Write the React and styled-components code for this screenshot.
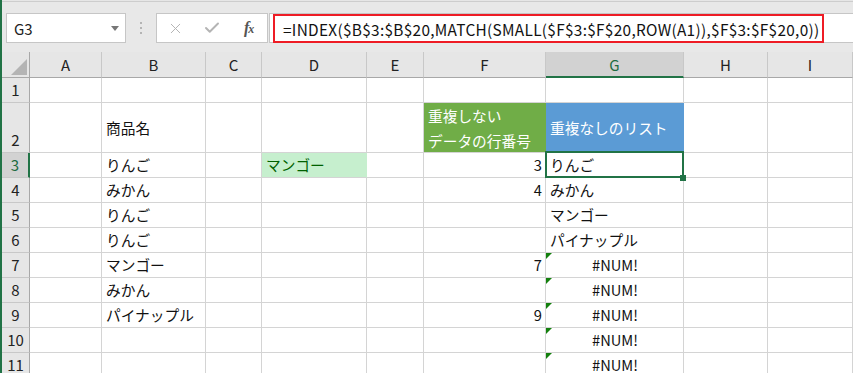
import React from "react";
import styled, { createGlobalStyle, css } from "styled-components";
import { X, Check } from "lucide-react";

const GlobalStyle = createGlobalStyle`
  html, body {
    margin: 0;
    padding: 0;
    overflow: hidden;
    background: #e6e6e6;
  }
  body {
    font-family: "Noto Sans CJK JP", "Noto Sans", sans-serif;
  }
`;

const Window = styled.div`
  width: 853px;
  height: 373px;
  box-sizing: border-box;
  border-left: 2px solid #217346;
  background: #e6e6e6;
  overflow: hidden;
`;

const Toolbar = styled.div`
  height: 51px;
  margin-top: 1px;
  box-sizing: border-box;
  border-top: 1px solid #cdcdcd;
  display: flex;
  align-items: flex-start;
  padding: 11px 0 0 4px;
  background: #e8e8e8;
`;

const NameBox = styled.div`
  width: 120px;
  height: 30px;
  box-sizing: border-box;
  border: 1px solid #c6c6c6;
  background: #fff;
  display: flex;
  align-items: center;
  justify-content: space-between;
  padding: 0 6px 0 7px;
  font-size: 15px;
  color: #222;
`;

const DropArrow = styled.span`
  width: 0;
  height: 0;
  border-left: 4px solid transparent;
  border-right: 4px solid transparent;
  border-top: 5px solid #777;
`;

const Grip = styled.div`
  width: 30px;
  height: 30px;
  display: flex;
  align-items: center;
  justify-content: center;
`;

const ActionBox = styled.div`
  width: 112px;
  height: 30px;
  box-sizing: border-box;
  border: 1px solid #c6c6c6;
  background: #fff;
  display: flex;
`;

const ActionSlot = styled.div`
  flex: 1;
  display: flex;
  align-items: center;
  justify-content: center;
  color: #b4b4b4;
`;

const FxIcon = styled.span`
  font-family: "Liberation Serif", "DejaVu Serif", serif;
  font-style: italic;
  font-weight: bold;
  font-size: 16px;
  color: #555;
  letter-spacing: -1px;

  small {
    font-size: 12px;
  }
`;

const FormulaBox = styled.div`
  flex: 1;
  height: 30px;
  margin-left: 1px;
  box-sizing: border-box;
  border: 1px solid #c6c6c6;
  border-right: none;
  background: #fff;
  padding-left: 3px;
`;

const Highlight = styled.div`
  width: 551px;
  height: 29px;
  box-sizing: border-box;
  border: 2px solid #ee1c25;
  padding: 0 0 0 8px;
  display: flex;
  align-items: center;
  font-size: 15.4px;
  letter-spacing: 0.3px;
  color: #111;
  white-space: nowrap;
  overflow: hidden;
`;

const Sheet = styled.div`
  display: grid;
  grid-template-columns: 28px 72px 104px 56px 105px 57px 122px 138px 84px 85px;
  grid-template-rows: 26px 25px 50px repeat(9, 25px);
  background: #fff;
`;

const Corner = styled.div`
  box-sizing: border-box;
  background: #e6e6e6;
  border-right: 1px solid #a8a8a8;
  border-bottom: 1px solid #a8a8a8;
  display: flex;
  align-items: flex-end;
  justify-content: flex-end;
  padding: 0 2px 2px 0;

  &::after {
    content: "";
    width: 0;
    height: 0;
    border-left: 16px solid transparent;
    border-bottom: 16px solid #b4b4b4;
  }
`;

const ColHeader = styled.div`
  box-sizing: border-box;
  background: ${(p) => (p.$active ? "#d2d2d2" : "#e6e6e6")};
  border-right: 1px solid #c8c8c8;
  border-bottom: ${(p) => (p.$active ? "2px solid #217346" : "1px solid #a8a8a8")};
  color: ${(p) => (p.$active ? "#1d6b40" : "#222")};
  display: flex;
  align-items: center;
  justify-content: center;
  font-size: 15px;
`;

const RowHeader = styled.div`
  box-sizing: border-box;
  background: ${(p) => (p.$active ? "#d2d2d2" : "#e6e6e6")};
  border-right: ${(p) => (p.$active ? "2px solid #217346" : "1px solid #a8a8a8")};
  border-bottom: 1px solid #c8c8c8;
  color: ${(p) => (p.$active ? "#1d6b40" : "#222")};
  display: flex;
  align-items: flex-end;
  justify-content: center;
  padding-bottom: 2px;
  font-size: 15px;
  line-height: 20px;
`;

const Cell = styled.div`
  position: relative;
  box-sizing: border-box;
  background: ${(p) => p.$fill || "#fff"};
  border-right: 1px solid ${(p) => p.$fill || "#d4d4d4"};
  border-bottom: 1px solid #d4d4d4;
  color: ${(p) => p.$color || "#111"};
  display: flex;
  align-items: ${(p) => (p.$middle ? "center" : "flex-end")};
  justify-content: ${(p) =>
    p.$align === "right" ? "flex-end" : p.$align === "center" ? "center" : "flex-start"};
  padding: ${(p) => (p.$middle ? "0 3px 0 4px" : "0 3px 2px 4px")};
  font-size: 14.7px;
  line-height: ${(p) => (p.$wrap ? "25px" : "20px")};
  white-space: ${(p) => (p.$wrap ? "pre-line" : "nowrap")};

  ${(p) =>
    p.$error &&
    css`
      &::before {
        content: "";
        position: absolute;
        top: 0;
        left: 0;
        border-top: 6px solid #13800d;
        border-right: 6px solid transparent;
      }
    `}

  ${(p) =>
    p.$selected &&
    css`
      &::after {
        content: "";
        position: absolute;
        inset: -2px -1px -1px -1px;
        border: 2px solid #217346;
        pointer-events: none;
      }
    `}
`;

const FillHandle = styled.span`
  position: absolute;
  right: -3px;
  bottom: -4px;
  width: 6px;
  height: 6px;
  background: #217346;
  z-index: 2;
`;

const COLUMNS = ["A", "B", "C", "D", "E", "F", "G", "H", "I"];
const ROW_COUNT = 11;

const GREEN = "#70ad47";
const BLUE = "#5b9bd5";

const cells = {
  "B2": { text: "商品名", middle: true },
  "F2": { text: "重複しない\nデータの行番号", middle: true, wrap: true, fill: GREEN, color: "#fff" },
  "G2": { text: "重複なしのリスト", middle: true, fill: BLUE, color: "#fff" },
  "B3": { text: "りんご" },
  "B4": { text: "みかん" },
  "B5": { text: "りんご" },
  "B6": { text: "りんご" },
  "B7": { text: "マンゴー" },
  "B8": { text: "みかん" },
  "B9": { text: "パイナップル" },
  "D3": { text: "マンゴー", fill: "#c6efce", color: "#006100" },
  "F3": { text: "3", align: "right" },
  "F4": { text: "4", align: "right" },
  "F7": { text: "7", align: "right" },
  "F9": { text: "9", align: "right" },
  "G3": { text: "りんご", selected: true },
  "G4": { text: "みかん" },
  "G5": { text: "マンゴー" },
  "G6": { text: "パイナップル" },
  "G7": { text: "#NUM!", align: "center", error: true },
  "G8": { text: "#NUM!", align: "center", error: true },
  "G9": { text: "#NUM!", align: "center", error: true },
  "G10": { text: "#NUM!", align: "center", error: true },
  "G11": { text: "#NUM!", align: "center", error: true },
};

const ACTIVE_COL = "G";
const ACTIVE_ROW = 3;

const App = () => {
  const rows = [];
  for (let r = 1; r <= ROW_COUNT; r++) {
    rows.push(
      <RowHeader key={"h" + r} $active={r === ACTIVE_ROW}>
        {r}
      </RowHeader>
    );
    COLUMNS.forEach((c) => {
      const cell = cells[c + r] || {};
      rows.push(
        <Cell
          key={c + r}
          $fill={cell.fill}
          $color={cell.color}
          $align={cell.align}
          $middle={cell.middle}
          $wrap={cell.wrap}
          $error={cell.error}
          $selected={cell.selected}
        >
          {cell.text}
          {cell.selected && <FillHandle />}
        </Cell>
      );
    });
  }

  return (
    <>
      <GlobalStyle />
      <Window>
        <Toolbar>
          <NameBox>
            G3
            <DropArrow />
          </NameBox>
          <Grip>
            <svg width="4" height="12" viewBox="0 0 4 12">
              <rect x="1" y="0" width="2" height="2" fill="#b4b4b4" />
              <rect x="1" y="5" width="2" height="2" fill="#b4b4b4" />
              <rect x="1" y="10" width="2" height="2" fill="#b4b4b4" />
            </svg>
          </Grip>
          <ActionBox>
            <ActionSlot>
              <X size={17} strokeWidth={1.4} />
            </ActionSlot>
            <ActionSlot>
              <Check size={18} strokeWidth={2.6} />
            </ActionSlot>
            <ActionSlot>
              <FxIcon>
                f<small>x</small>
              </FxIcon>
            </ActionSlot>
          </ActionBox>
          <FormulaBox>
            <Highlight>=INDEX($B$3:$B$20,MATCH(SMALL($F$3:$F$20,ROW(A1)),$F$3:$F$20,0))</Highlight>
          </FormulaBox>
        </Toolbar>
        <Sheet>
          <Corner />
          {COLUMNS.map((c) => (
            <ColHeader key={c} $active={c === ACTIVE_COL}>
              {c}
            </ColHeader>
          ))}
          {rows}
        </Sheet>
      </Window>
    </>
  );
};

export default App;
